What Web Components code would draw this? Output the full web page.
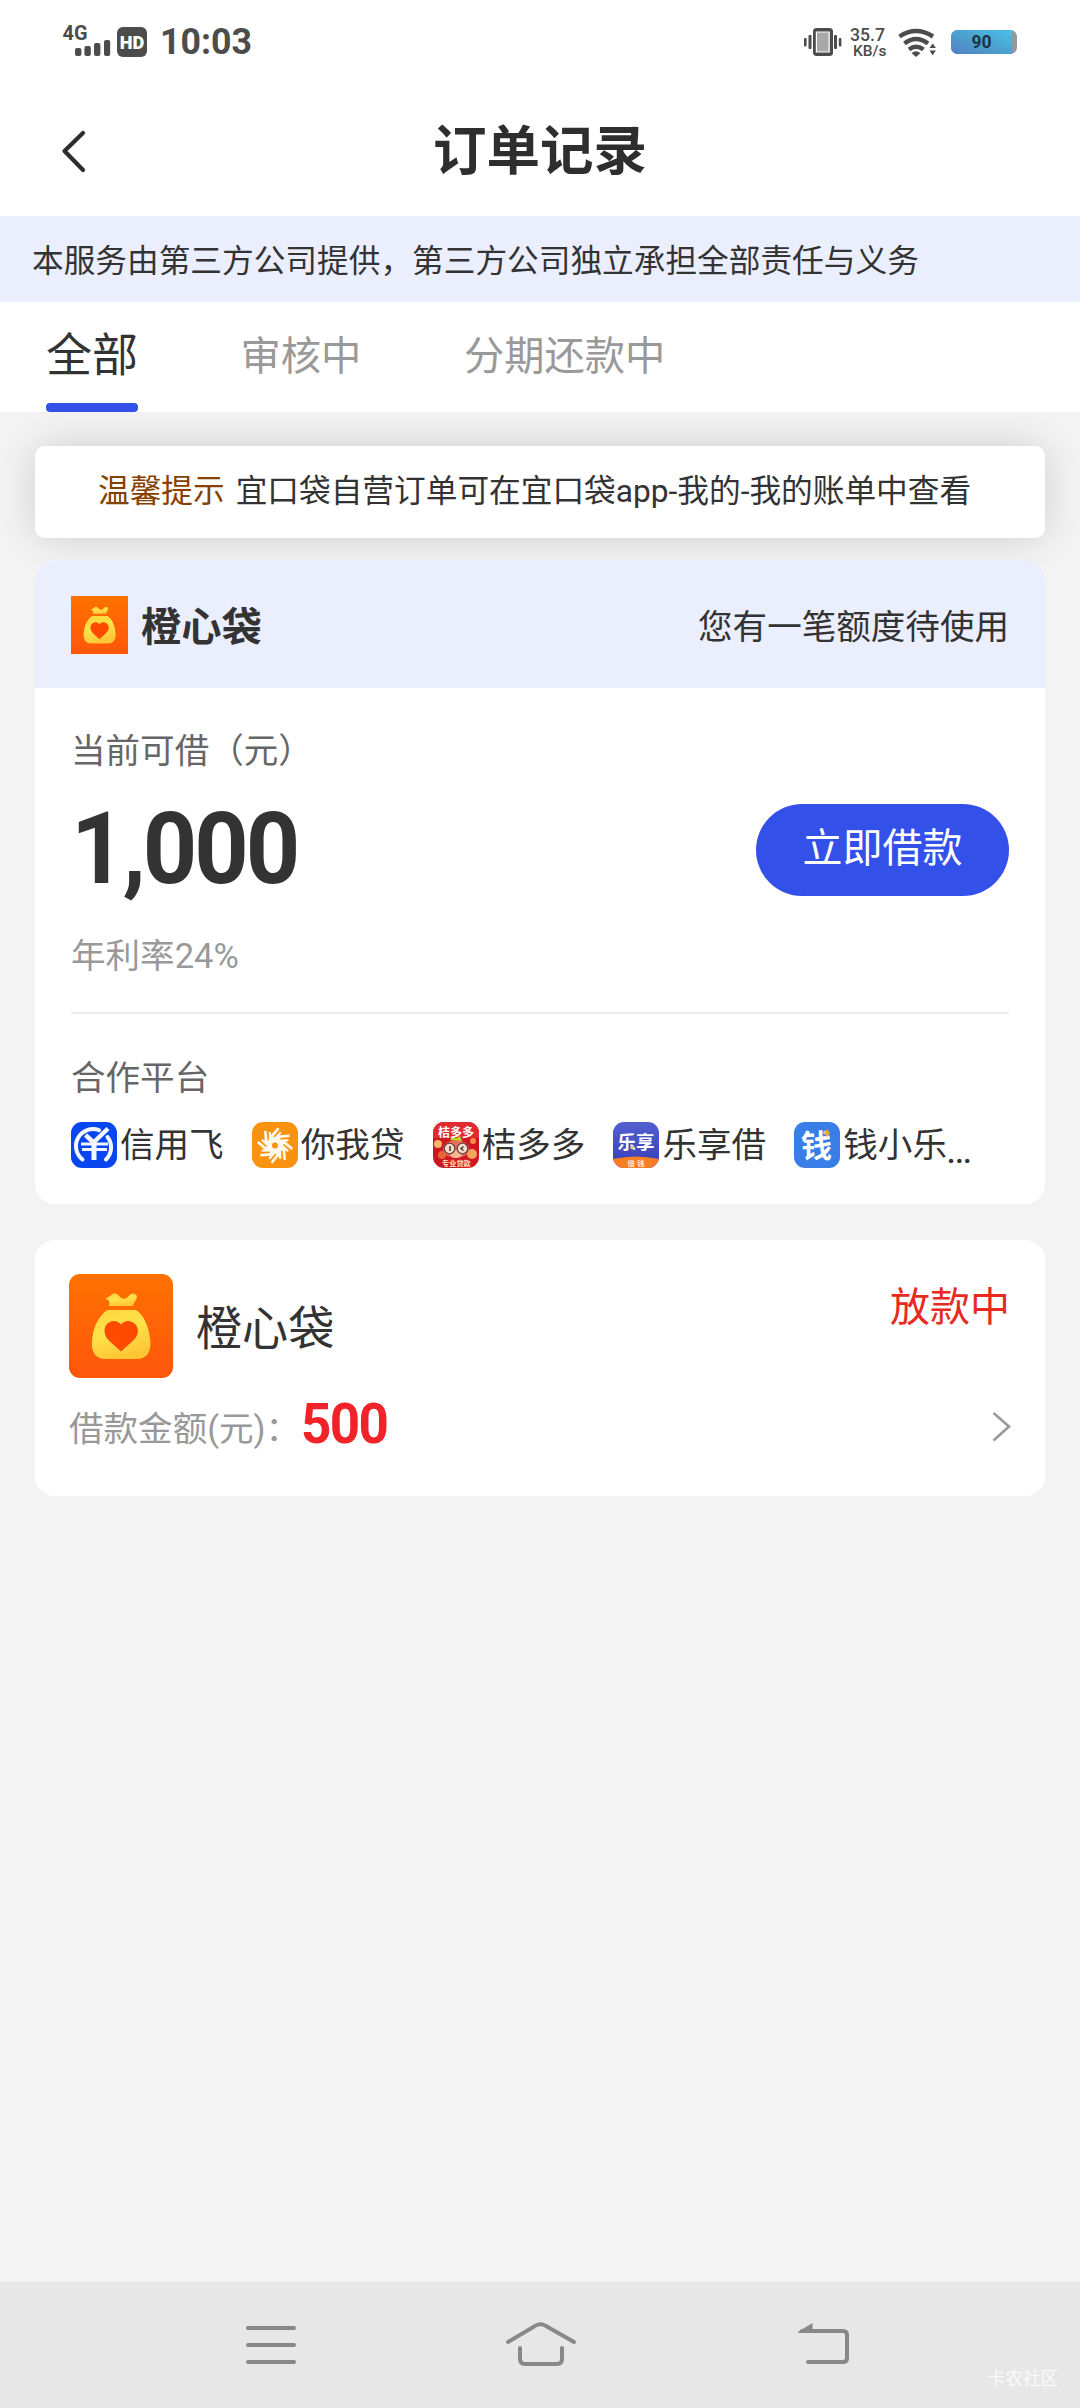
<!DOCTYPE html>
<html lang="zh-CN">
<head>
<meta charset="utf-8">
<title>订单记录</title>
<style>
html,body{margin:0;padding:0}
body{width:1080px;height:2408px;overflow:hidden;background:#f3f3f3;font-family:Roboto,"Noto Sans CJK SC",sans-serif;color:#333}
</style>
</head>
<body>
<order-app></order-app>
<script>
const define = (name, html) => {
  const t = document.createElement('template');
  t.innerHTML = html;
  customElements.define(name, class extends HTMLElement {
    constructor() {
      super();
      this.attachShadow({mode: 'open'}).appendChild(t.content.cloneNode(true));
    }
  });
};

define('status-bar', `
<style>
:host{display:flex;height:84px;align-items:center;background:#fff;box-sizing:border-box}
svg{display:block;width:1080px;height:84px}
text{font-family:Roboto,sans-serif;fill:#4c4c4c}
</style>
<svg viewBox="0 0 1080 84">
  <defs><linearGradient id="b" x1="0" y1="1" x2="1" y2="0"><stop offset="0" stop-color="#5280c4"/><stop offset=".55" stop-color="#4aa5cf"/><stop offset="1" stop-color="#4bc0ea"/></linearGradient></defs>
  <text x="62.5" y="40" font-size="20.5" font-weight="700" textLength="25" lengthAdjust="spacingAndGlyphs">4G</text>
  <g fill="#4c4c4c"><rect x="75" y="48" width="6.4" height="8" rx="2"/><rect x="84.4" y="46" width="6.4" height="10" rx="2"/><rect x="94" y="43" width="6.4" height="13" rx="2"/><rect x="104" y="40" width="6.2" height="16" rx="2"/><rect x="117" y="27" width="30" height="30" rx="6"/></g>
  <text x="119.8" y="48.5" font-size="18.5" font-weight="900" textLength="24.5" lengthAdjust="spacingAndGlyphs" style="fill:#fff">HD</text>
  <text x="160" y="54" font-size="36.5" font-weight="700" textLength="92" lengthAdjust="spacingAndGlyphs">10:03</text>
  <g fill="#4c4c4c"><path fill-rule="evenodd" d="M816.5 28h13a3.500 3.500 0 0 1 3.500 3.500v21a3.500 3.500 0 0 1-3.500 3.500h-13a3.500 3.500 0 0 1-3.500-3.500v-21a3.500 3.500 0 0 1 3.500-3.500zM815.800 31.500v21h14v-21z"/><rect x="817" y="32.500" width="11.500" height="19" fill="#a8a8a8"/><rect x="808.500" y="35" width="3" height="14" rx="1"/><rect x="804" y="38" width="2.600" height="8.500" rx="1"/><rect x="834" y="35" width="3" height="14" rx="1"/><rect x="838.800" y="38" width="2.600" height="8.500" rx="1"/></g>
  <text x="850" y="41" font-size="18" font-weight="500" textLength="35" lengthAdjust="spacingAndGlyphs">35.7</text>
  <text x="853" y="56" font-size="14.500" font-weight="500" textLength="33.500" lengthAdjust="spacingAndGlyphs">KB/s</text>
  <g fill="none" stroke="#4c4c4c" stroke-width="4.500"><path d="M899.500 36.500Q916 25.500 933 36.500"/><path d="M904.500 43.500Q916 34.500 928 43.500"/><path d="M909 49.500Q916 44 923.500 49.500"/></g>
  <g fill="#4c4c4c"><path d="M911.500 53q4.500-3.500 9 0l-4.500 4zM929.500 48l3.200-4.600 3.200 4.600zM929.500 50.600l3.200 4.600 3.200-4.600z"/></g>
  <rect x="951" y="30" width="66" height="24" rx="6.500" fill="#8e9ba0"/>
  <path d="M957.500 30H1012V54H957.500a6.500 6.500 0 0 1-6.500-6.500V36.500a6.500 6.500 0 0 1 6.500-6.500z" fill="url(#b)"/>
  <text x="971.500" y="48" font-size="17.500" font-weight="700" style="fill:#1c3448">90</text>
</svg>`);

define('page-title', `
<style>
:host{display:grid;grid-template-columns:140px 1fr 140px;align-items:center;height:132px;background:#fff}
svg{margin:2px 0 0 56px;display:block}
h1{margin:4px 0 0;font-size:53.500px;line-height:70px;font-weight:700;text-align:center;color:#2e2e2e}
</style>
<svg width="40" height="50" viewBox="56 126 40 50"><path d="M83 133 64.500 151 83 170" fill="none" stroke="#2d2d2d" stroke-width="4.200" stroke-linecap="round" stroke-linejoin="round"/></svg>
<h1><slot></slot></h1>`);

define('notice-bar', `
<style>
:host{display:flex;align-items:center;box-sizing:border-box;height:86px;background:#ebeefd;padding:5px 0 0 32px;font-size:31.680px;line-height:46px;white-space:nowrap;color:#333}
</style><span><slot></slot></span>`);

define('tab-item', `
<style>
:host{display:flex;flex-direction:column;height:110px;font-size:40.300px;color:#999;line-height:60px;white-space:nowrap}
span{display:block;padding-top:25px}
:host([active]){font-size:46px;color:#333;justify-content:space-between}
:host([active]) span{padding-top:23px}
i{display:none;height:9px;border-radius:4px;background:#3350e8}
:host([active]) i{display:block}
</style><span><slot></slot></span><i></i>`);

define('tab-strip', `
<style>:host{display:flex;height:110px;background:#fff;padding-left:46px;gap:102.500px}</style><slot></slot>`);

define('tip-card', `
<style>
:host{display:flex;align-items:center;box-sizing:border-box;height:92px;margin:34px 35px 0;padding:0 0 1px 63px;border-radius:10px;background:#fff;box-shadow:0 0 40px rgba(0,0,0,.15);font-size:31.680px;line-height:46px;gap:11px;white-space:nowrap}
b{font-weight:400;color:#864000}
</style><b><slot name="label"></slot></b><span><slot></slot></span>`);

define('bag-logo', `
<style>:host{display:block;overflow:hidden;flex:none}svg{display:block;width:100%;height:100%}</style>
<svg viewBox="0 0 104 104" preserveAspectRatio="none">
<defs><linearGradient id="o" x1="0" y1="0" x2="0" y2="1"><stop offset="0" stop-color="#ff7200"/><stop offset="1" stop-color="#ff560c"/></linearGradient>
<linearGradient id="y" x1="0" y1="0" x2=".35" y2="1"><stop offset="0" stop-color="#ffd43a"/><stop offset=".5" stop-color="#ffe34a"/><stop offset="1" stop-color="#ffc636"/></linearGradient></defs>
<rect width="104" height="104" fill="url(#o)"/>
<path d="M36 24.500Q38.500 23.500 41 22Q46 16.500 50.500 22.500Q53 25.500 56.500 24.500Q58.500 24 60.500 21Q64 18 67.500 21Q68.500 24 66 27.500Q64.500 29.500 64 32H40Q42 26 36 24.500z" fill="url(#y)"/>
<path d="M38 36H67Q79 44 81.500 68Q82 85 67 85H37Q22 85 23 68Q24 47 38 36z" fill="url(#y)"/>
<path d="M52 50.500C46 43.500 35 48 35.500 57.500C36 62 38 65 42 68.500L52 77.500 62 68.500C66 65 68.500 62 69 57.500C69 48 58 43.500 52 50.500z" fill="#ff4b00"/>
</svg>`);

define('offer-card', `
<style>
:host{display:flex;flex-direction:column;box-sizing:border-box;height:644px;margin:22px 35px 0;border-radius:20px;background:#fff;overflow:hidden;position:relative}
header{display:flex;align-items:center;height:128px;background:#ebeefd;padding:0 36px;flex:none;box-sizing:border-box}
bag-logo{width:57px;height:58px;margin-bottom:-2px}
h2{margin:7px 0 0 13px;font-size:40.300px;line-height:56px;font-weight:700;color:#333;flex:1}
.msg{font-size:34.560px;line-height:50px;margin-top:6px;white-space:nowrap}
.body{display:flex;flex-direction:column;padding:0 36px}
.label{font-size:34.560px;line-height:50px;color:#666;margin-top:38px}
hr+.label{margin-top:39px}
.row{display:flex;align-items:center;justify-content:space-between;height:120px;margin-top:13px}
.amount{font-size:99.500px;line-height:120px;font-weight:700;color:#333;letter-spacing:-3.200px;transform-origin:0 50%;transform:scaleX(.955)}
button{font:400 40px/60px Roboto,"Noto Sans CJK SC",sans-serif;width:253px;height:92px;border:0;border-radius:46px;background:#3350e9;color:#fff;padding:0 0 3px;margin-top:2px}
.rate{font-size:34.560px;line-height:50px;color:#999;margin-top:22px}
hr{border:0;height:2px;background:#ededed;margin:31px 0 0;width:100%}
</style>
<header><bag-logo></bag-logo><h2><slot name="brand"></slot></h2><span class="msg"><slot name="message"></slot></span></header>
<div class="body">
<div class="label"><slot name="label"></slot></div>
<div class="row"><div class="amount"><slot name="amount"></slot></div><button><slot name="action"></slot></button></div>
<div class="rate"><slot name="rate"></slot></div>
<hr>
<div class="label"><slot name="partners-label"></slot></div>
<slot name="partners"></slot>
</div>`);

define('partner-list', `
<style>:host{display:flex;margin-top:19px;height:46px;gap:28.200px;align-items:center}</style><slot></slot>`);

define('partner-item', `
<style>
:host{display:flex;align-items:center;gap:3px;font-size:34.560px;line-height:46px;color:#333;white-space:nowrap}
::slotted(svg){display:block;width:46px;height:46px;border-radius:11px;flex:none;overflow:hidden}
span{margin-top:-1px}
em{font-style:normal;display:none;font-size:39px;margin:9px 0 0 -4px}
:host([more]) em{display:block}
</style><slot name="icon"></slot><span><slot></slot></span><em>…</em>`);

define('order-card', `
<style>
:host{display:flex;flex-direction:column;box-sizing:border-box;height:256px;margin:36px 35px 0;padding:34px 34px 0;border-radius:20px;background:#fff}
.top{display:flex;height:104px}
bag-logo{width:104px;height:104px;border-radius:11px}
h3{margin:23px 0 0 23px;font-size:46.100px;line-height:64px;font-weight:400;color:#333;flex:1}
.status{font-size:40px;line-height:56px;color:#e82a22;margin:6px 1px 0 0}
.bottom{display:flex;align-items:center;height:100px}
.label{font-size:34.560px;line-height:50px;color:#999;margin-top:1px}
.sum{font-size:55.500px;line-height:64px;font-weight:700;color:#f12228;letter-spacing:-1.800px;transform-origin:0 50%;transform:scaleX(.955);flex:1;margin:-6px 0 0 1px}
svg{margin-top:-3px}
</style>
<div class="top"><bag-logo></bag-logo><h3><slot name="brand"></slot></h3><div class="status"><slot name="status"></slot></div></div>
<div class="bottom"><div class="label"><slot name="label"></slot></div><div class="sum"><slot name="sum"></slot></div>
<svg width="20" height="34" viewBox="992 1409 20 34"><path d="M994.500 1412 1010 1425.500 994.500 1439.500" fill="none" stroke="#999" stroke-width="2.600"/></svg></div>`);

define('system-nav', `
<style>
:host{display:block;height:126px;background:#e7e7e7;margin-top:auto}
svg{display:block}
text{font-family:"Noto Sans CJK SC",sans-serif}
</style>
<svg width="1080" height="126" viewBox="0 2282 1080 126">
<path d="M0 2287.500H1080" stroke="#eaeaea"/>
<g fill="none" stroke="#888" stroke-width="4" stroke-linecap="round" stroke-linejoin="round">
<path d="M248 2328H294M248 2345H294M248 2362H294"/>
<path d="M508 2342 535 2326Q540.500 2322.500 546 2326L574 2342" stroke-width="3.800"/>
<path d="M520 2348V2359Q520 2364 525 2364H557Q562 2364 562 2359V2348"/>
<path d="M802 2331H843Q847 2331 847 2335V2358Q847 2362 843 2362H808"/>
</g>
<path d="M798.500 2331.500 812.500 2323V2333H800Q797 2333 798.500 2331.500z" fill="#888"/>
<text x="987.500" y="2385" font-size="17.700" fill="#fafafa">卡农社区</text>
</svg>`);

define('order-app', `
<style>
:host{display:flex;flex-direction:column;width:1080px;height:2408px;background:#f3f3f3}
status-bar,page-title,notice-bar,tab-strip{position:relative}
svg text{font-family:"Noto Sans CJK SC",sans-serif;font-weight:700}
</style>
<status-bar></status-bar>
<page-title>订单记录</page-title>
<notice-bar>本服务由第三方公司提供，第三方公司独立承担全部责任与义务</notice-bar>
<tab-strip><tab-item active>全部</tab-item><tab-item>审核中</tab-item><tab-item>分期还款中</tab-item></tab-strip>
<tip-card><span slot="label">温馨提示</span>宜口袋自营订单可在宜口袋app-我的-我的账单中查看</tip-card>
<offer-card>
<span slot="brand">橙心袋</span><span slot="message">您有一笔额度待使用</span>
<span slot="label">当前可借（元）</span><span slot="amount">1,000</span><span slot="action">立即借款</span><span slot="rate">年利率24%</span>
<span slot="partners-label">合作平台</span>
<partner-list slot="partners">
<partner-item><svg slot="icon" viewBox="0 0 46 46"><rect width="46" height="46" fill="#0846f0"/><g fill="none" stroke="#f4f7ff"><path d="M11.500 37.500A17 17 0 0 1 28 8.200" stroke-width="4" stroke-linecap="round"/><path d="M36.500 15A17 17 0 0 1 35 37.500" stroke-width="4" stroke-linecap="round"/><path d="M14.500 13 22.500 20.500 37 6.500" stroke-width="4.500"/><path d="M10 22H37M11 27.500H36" stroke-width="2.800"/><path d="M23 21V38" stroke-width="5"/></g></svg>信用飞</partner-item>
<partner-item><svg slot="icon" viewBox="0 0 46 46"><rect width="46" height="46" fill="#f9920f"/><g id="petals" fill="#fff8ec"></g><circle cx="23" cy="23.500" r="3" fill="#f9920f"/></svg>你我贷</partner-item>
<partner-item><svg slot="icon" viewBox="0 0 46 46"><rect width="46" height="46" fill="#cf1722"/><path d="M0 0H46V16H0z" fill="#e12b32"/><circle cx="5" cy="22" r="4" fill="#f9b36d"/><circle cx="40" cy="19" r="3" fill="#f28b4f"/><circle cx="39" cy="32" r="5" fill="#f5a45d"/><circle cx="9" cy="33" r="4" fill="#e96638"/><ellipse cx="23" cy="27" rx="13" ry="9" fill="#ee6d5b"/><ellipse cx="23" cy="32" rx="6" ry="4" fill="#ffb58f"/><path d="M17 18 20 14.500 23 16.500 27 14 29 19z" fill="#b9d72c"/><g fill="#f6dccb" stroke="#6b4340" stroke-width="1.300"><circle cx="16.500" cy="26.500" r="5.300"/><circle cx="29.500" cy="26.500" r="5.300"/></g><path d="M17 24V29M30.500 24.500 28 26.500 30.500 28.500" stroke="#493332" stroke-width="1.500" fill="none"/><text x="5" y="14.500" font-size="12" fill="#fff" textLength="36">桔多多</text><text x="9" y="43.500" font-size="7.200" fill="#ffe2bd">专业贷款</text></svg>桔多多</partner-item>
<partner-item><svg slot="icon" viewBox="0 0 46 46"><defs><linearGradient id="l" x1="0" y1="0" x2="0" y2="1"><stop offset="0" stop-color="#5460d0"/><stop offset="1" stop-color="#353db9"/></linearGradient></defs><rect width="46" height="46" fill="url(#l)"/><path d="M0 37Q23 32 46 37V46H0z" fill="#f97d25"/><text x="4.500" y="26.500" font-size="18.500" fill="#fff">乐享</text><circle cx="19" cy="25.500" r="1.800" fill="#d6cd79"/><text x="14.500" y="43.500" font-size="7.200" fill="#ffe9d8" textLength="17">借钱</text></svg>乐享借</partner-item>
<partner-item more><svg slot="icon" viewBox="0 0 46 46"><rect width="46" height="46" fill="#397ee7"/><text x="7" y="34.500" font-size="31" fill="#fff">钱</text><path d="M33 7 36 11 33 15 30 11z" fill="#f0a62e"/></svg>钱小乐</partner-item>
</partner-list>
</offer-card>
<order-card><span slot="brand">橙心袋</span><span slot="status">放款中</span><span slot="label">借款金额(元)：</span><span slot="sum">500</span></order-card>
<system-nav></system-nav>`);

// Eight identical blades turned around the pinwheel's centre.
const petals = document.querySelector('order-app').shadowRoot.querySelector('#petals');
for (let i = 0; i < 8; i++) {
  const p = document.createElementNS('http://www.w3.org/2000/svg', 'path');
  p.setAttribute('d', 'M19 23 18.500 13.500 25.500 5.500 27.500 7 21.500 14.500 22.500 15.500 28 9.500 29.500 11 24 18V23z');
  p.setAttribute('transform', `rotate(${i * 45} 23 23.500)`);
  petals.appendChild(p);
}
</script>
</body>
</html>
